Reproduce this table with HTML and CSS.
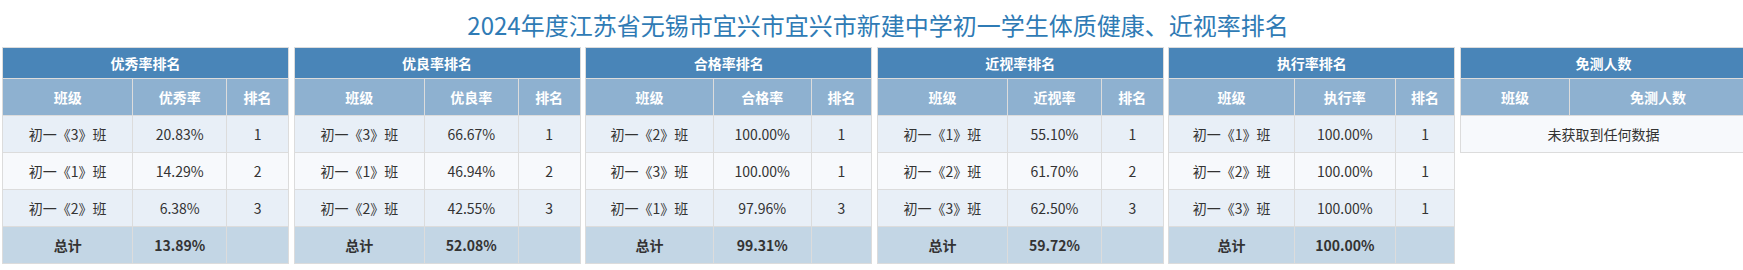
FILE: index.html
```html
<!DOCTYPE html>
<html lang="zh-CN">
<head>
<meta charset="utf-8">
<title>体质健康排名</title>
<link rel="stylesheet" href="styles.css">
</head>
<body>
<div class="page">
  <h1 class="title">2024年度江苏省无锡市宜兴市宜兴市新建中学初一学生体质健康、近视率排名</h1>
  <div class="boards">
    <table class="rank">
      <thead>
        <tr class="cap"><th colspan="3">优秀率排名</th></tr>
        <tr class="sub"><th>班级</th><th>优秀率</th><th>排名</th></tr>
      </thead>
      <tbody>
        <tr class="odd"><td>初一《3》班</td><td>20.83%</td><td>1</td></tr>
        <tr class="even"><td>初一《1》班</td><td>14.29%</td><td>2</td></tr>
        <tr class="odd"><td>初一《2》班</td><td>6.38%</td><td>3</td></tr>
        <tr class="total"><td>总计</td><td>13.89%</td><td></td></tr>
      </tbody>
    </table>
    <table class="rank">
      <thead>
        <tr class="cap"><th colspan="3">优良率排名</th></tr>
        <tr class="sub"><th>班级</th><th>优良率</th><th>排名</th></tr>
      </thead>
      <tbody>
        <tr class="odd"><td>初一《3》班</td><td>66.67%</td><td>1</td></tr>
        <tr class="even"><td>初一《1》班</td><td>46.94%</td><td>2</td></tr>
        <tr class="odd"><td>初一《2》班</td><td>42.55%</td><td>3</td></tr>
        <tr class="total"><td>总计</td><td>52.08%</td><td></td></tr>
      </tbody>
    </table>
    <table class="rank">
      <thead>
        <tr class="cap"><th colspan="3">合格率排名</th></tr>
        <tr class="sub"><th>班级</th><th>合格率</th><th>排名</th></tr>
      </thead>
      <tbody>
        <tr class="odd"><td>初一《2》班</td><td>100.00%</td><td>1</td></tr>
        <tr class="even"><td>初一《3》班</td><td>100.00%</td><td>1</td></tr>
        <tr class="odd"><td>初一《1》班</td><td>97.96%</td><td>3</td></tr>
        <tr class="total"><td>总计</td><td>99.31%</td><td></td></tr>
      </tbody>
    </table>
    <table class="rank">
      <thead>
        <tr class="cap"><th colspan="3">近视率排名</th></tr>
        <tr class="sub"><th>班级</th><th>近视率</th><th>排名</th></tr>
      </thead>
      <tbody>
        <tr class="odd"><td>初一《1》班</td><td>55.10%</td><td>1</td></tr>
        <tr class="even"><td>初一《2》班</td><td>61.70%</td><td>2</td></tr>
        <tr class="odd"><td>初一《3》班</td><td>62.50%</td><td>3</td></tr>
        <tr class="total"><td>总计</td><td>59.72%</td><td></td></tr>
      </tbody>
    </table>
    <table class="rank">
      <thead>
        <tr class="cap"><th colspan="3">执行率排名</th></tr>
        <tr class="sub"><th>班级</th><th>执行率</th><th>排名</th></tr>
      </thead>
      <tbody>
        <tr class="odd"><td>初一《1》班</td><td>100.00%</td><td>1</td></tr>
        <tr class="even"><td>初一《2》班</td><td>100.00%</td><td>1</td></tr>
        <tr class="odd"><td>初一《3》班</td><td>100.00%</td><td>1</td></tr>
        <tr class="total"><td>总计</td><td>100.00%</td><td></td></tr>
      </tbody>
    </table>
    <table class="rank">
      <thead>
        <tr class="cap"><th colspan="2">免测人数</th></tr>
        <tr class="sub"><th>班级</th><th>免测人数</th></tr>
      </thead>
      <tbody>
        <tr class="even"><td colspan="2">未获取到任何数据</td></tr>
      </tbody>
    </table>
  </div>
</div>
</body>
</html>
```
FILE: styles.css
```css
html, body {
  margin: 0;
  padding: 0;
  background: #fff;
  overflow: hidden;
}
body {
  font-family: "Noto Sans CJK SC", "Noto Sans", sans-serif;
  font-size: 14px;
  color: #333;
}
.page {
  width: 1756px;
}
.title {
  margin: 0;
  padding: 12px 0 9px;
  font-size: 24px;
  line-height: 26px;
  font-weight: normal;
  color: #2f7bb5;
  text-align: center;
}
.boards {
  display: grid;
  grid-template-columns: repeat(6, 287px);
  column-gap: 4.6px;
  align-items: start;
  padding-left: 2px;
}
.rank {
  width: 287px;
  border-collapse: collapse;
  border: 1px solid #dcdcdc;
}
.rank th, .rank td {
  border: 1px solid #dcdcdc;
  padding: 8px 8px;
  line-height: 20px;
  text-align: center;
  white-space: nowrap;
}
.rank th {
  color: #fff;
  font-weight: bold;
}
.cap th {
  background: #4985b8;
  padding-top: 5px;
  padding-bottom: 5px;
}
.sub th {
  background: #8eb1d0;
}
.odd td {
  background: #e8eff7;
}
.even td {
  background: #f7f9fc;
}
.total td {
  background: #c3d6e5;
  font-weight: bold;
}
```
